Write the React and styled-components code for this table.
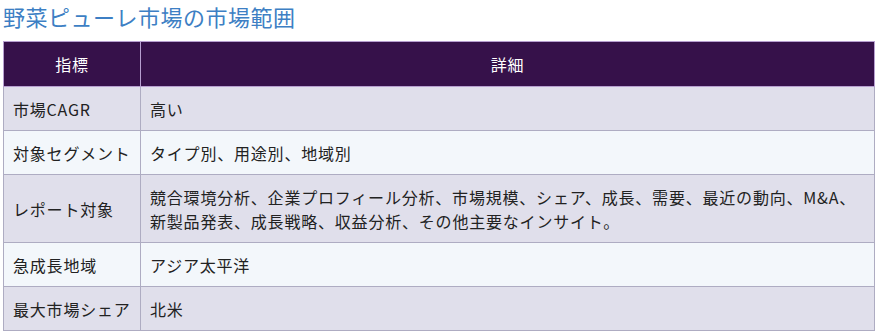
import React from "react";
import styled, { createGlobalStyle } from "styled-components";

const Global = createGlobalStyle`
  html, body { margin: 0; padding: 0; background: #ffffff; }
  body { font-family: "Noto Sans CJK JP", "Noto Sans", sans-serif; }
`;

const Page = styled.div`
  padding: 0 8px 0 3px;
  width: 872px;
`;

const Title = styled.h2`
  margin: 0;
  padding: 1px 0 0 0;
  height: 41px;
  box-sizing: border-box;
  font-size: 22px;
  letter-spacing: 0.5px;
  font-weight: 400;
  line-height: 30px;
  color: #3d7fc4;
  white-space: nowrap;
`;

const Table = styled.table`
  width: 872px;
  border-collapse: collapse;
  font-size: 16px;
  color: #222;
`;

const Th = styled.th`
  background: #36114a;
  color: #ffffff;
  font-weight: 400;
  height: 44px;
  padding: 0 10px;
  border: 1px solid #b79fd0;
  text-align: center;
  letter-spacing: 0.8px;
  width: ${(p) => p.$w || "auto"};
`;

const Row = styled.tr`
  background: ${(p) => (p.$odd ? "#e0dfeb" : "#f3f7fb")};
`;

const Td = styled.td`
  border: 1px solid #aeacc2;
  padding: 10px 9px 9px;
  line-height: 24px;
  letter-spacing: 0.8px;
  text-align: left;
  vertical-align: middle;
  white-space: ${(p) => (p.$nowrap ? "nowrap" : "normal")};
`;

const rows = [
  ["市場CAGR", "高い"],
  ["対象セグメント", "タイプ別、用途別、地域別"],
  [
    "レポート対象",
    "競合環境分析、企業プロフィール分析、市場規模、シェア、成長、需要、最近の動向、M&A、新製品発表、成長戦略、収益分析、その他主要なインサイト。",
  ],
  ["急成長地域", "アジア太平洋"],
  ["最大市場シェア", "北米"],
];

export default function App() {
  return (
    <Page>
      <Global />
      <Title>野菜ピューレ市場の市場範囲</Title>
      <Table>
        <thead>
          <tr>
            <Th $w="116px">指標</Th>
            <Th>詳細</Th>
          </tr>
        </thead>
        <tbody>
          {rows.map(([k, v], i) => (
            <Row key={k} $odd={i % 2 === 0}>
              <Td $nowrap>{k}</Td>
              <Td>{v}</Td>
            </Row>
          ))}
        </tbody>
      </Table>
    </Page>
  );
}
